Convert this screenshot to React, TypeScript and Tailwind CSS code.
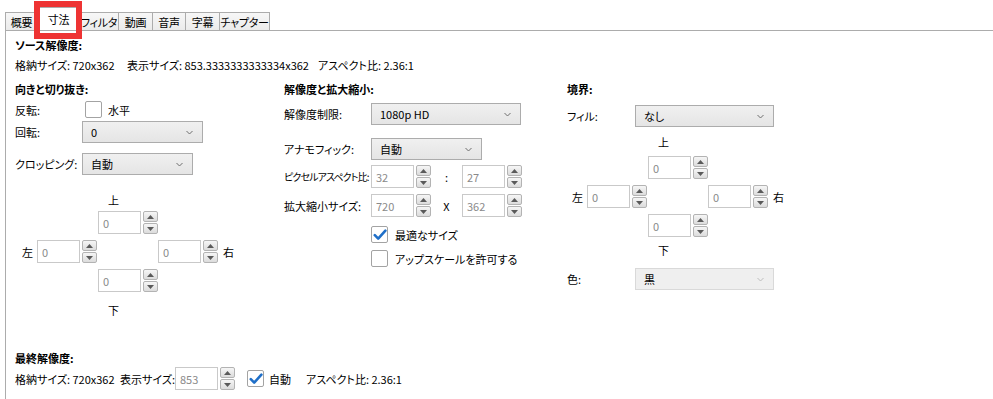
import React from "react";

const tabs = [
  { label: "概要", w: "w-[32px]" },
  { label: "寸法", w: "w-[42px]", active: true },
  { label: "フィルタ", w: "w-[39px]" },
  { label: "動画", w: "w-[34px]" },
  { label: "音声", w: "w-[33px]" },
  { label: "字幕", w: "w-[34px]" },
  { label: "チャプター", w: "w-[51px]" },
];

function Arrow({ up }: { up?: boolean }) {
  return (
    <svg width="7" height="4" viewBox="0 0 7 4" className="block">
      <path d={up ? "M0 4 L3.5 0 L7 4 Z" : "M0 0 L3.5 4 L7 0 Z"} fill="#5a5a5a" />
    </svg>
  );
}

function Spin({ value }: { value: string }) {
  return (
    <div className="flex h-[23px] shrink-0">
      <div className="w-[43px] h-full border border-[#c9c9c9] bg-white text-[#8a8a8a] pl-[4px] flex items-center">
        {value}
      </div>
      <div className="ml-[2px] w-[15px] h-full flex flex-col gap-[1px]">
        <div className="flex-1 flex items-center justify-center rounded-[2px] border border-[#b3b3b3] bg-gradient-to-b from-[#f6f6f6] to-[#dcdcdc]">
          <Arrow up />
        </div>
        <div className="flex-1 flex items-center justify-center rounded-[2px] border border-[#b3b3b3] bg-gradient-to-b from-[#f6f6f6] to-[#dcdcdc]">
          <Arrow />
        </div>
      </div>
    </div>
  );
}

function Chevron({ light }: { light?: boolean }) {
  return (
    <svg width="7" height="5" viewBox="0 0 7 5" className="block">
      <path d="M0.5 1 L3.5 4 L6.5 1" fill="none" stroke={light ? "#bdbdbd" : "#6e6e6e"} strokeWidth="1" />
    </svg>
  );
}

function Select({ value, className, disabled }: { value: string; className: string; disabled?: boolean }) {
  return (
    <div
      className={`h-[22px] shrink-0 flex items-center justify-between pl-[8px] pr-[9px] border ${
        disabled
          ? "border-[#d9d9d9] bg-[#efefef]"
          : "border-[#acacac] bg-gradient-to-b from-[#f0f0f0] to-[#e5e5e5]"
      } ${className}`}
    >
      <span>{value}</span>
      <Chevron light={disabled} />
    </div>
  );
}

function Check({ checked }: { checked?: boolean }) {
  return (
    <div className="w-[17px] h-[17px] shrink-0 border border-[#a3a3a3] rounded-[2px] bg-white flex items-center justify-center">
      {checked && (
        <svg width="14" height="12" viewBox="0 0 14 12">
          <path
            d="M1.8 6.2 L5.2 9.6 L12.4 1.6"
            fill="none"
            stroke="#1f6fc8"
            strokeWidth="2.6"
            strokeLinecap="round"
            strokeLinejoin="round"
          />
        </svg>
      )}
    </div>
  );
}

function Cross({ topGap, bottomGap }: { topGap: string; bottomGap: string }) {
  return (
    <div className="flex flex-col">
      <div className="pl-[86px] h-[16px]">上</div>
      <div className={`pl-[76px] ${topGap}`}>
        <Spin value="0" />
      </div>
      <div className="flex items-center mt-[6px]">
        <span className="w-[15px] shrink-0">左</span>
        <Spin value="0" />
        <div className="w-[61px] shrink-0" />
        <Spin value="0" />
        <span className="ml-[5px]">右</span>
      </div>
      <div className="pl-[76px] mt-[6px]">
        <Spin value="0" />
      </div>
      <div className={`pl-[86px] h-[16px] ${bottomGap}`}>下</div>
    </div>
  );
}

export default function App() {
  return (
    <div className="w-[993px] h-[399px] relative overflow-hidden bg-white text-black text-[11px] leading-[16px] font-['Noto_Sans_CJK_JP','Noto_Sans',sans-serif] [font-feature-settings:'palt']">
      {/* Tab strip */}
      <div className="h-[30px] flex items-end pl-[5px]">
        {tabs.map((t, i) => (
          <div
            key={t.label}
            className={`${t.w} shrink-0 whitespace-nowrap tracking-[-0.3px] flex items-center justify-center border-t border-l border-[#acacac] ${
              i === tabs.length - 1 ? "border-r" : ""
            } ${t.active ? "h-[23px] bg-white" : "h-[18px] bg-gradient-to-b from-[#f7f7f7] to-[#ebebeb]"}`}
          >
            {t.label}
          </div>
        ))}
      </div>

      {/* Panel */}
      <div className="ml-[5px] border-l border-t border-[#acacac] h-[369px] pl-[9px] pt-[6px]">
        <div className="font-bold">ソース解像度:</div>
        <div className="flex mt-[4px] whitespace-nowrap">
          <span className="w-[112px] shrink-0">格納サイズ: 720x362</span>
          <span className="w-[191px] shrink-0">表示サイズ: 853.3333333333334x362</span>
          <span>アスペクト比: 2.36:1</span>
        </div>

        <div className="flex mt-[8px] h-[269px]">
          {/* Orientation and crop */}
          <div className="w-[269px] shrink-0">
            <div className="font-bold">向きと切り抜き:</div>
            <div className="flex items-center mt-[4px] h-[17px]">
              <span className="w-[70px] shrink-0">反転:</span>
              <Check />
              <span className="ml-[6px]">水平</span>
            </div>
            <div className="flex items-center mt-[3px]">
              <span className="w-[67px] shrink-0">回転:</span>
              <Select value="0" className="w-[121px]" />
            </div>
            <div className="flex items-center mt-[10px]">
              <span className="w-[67px] shrink-0">クロッピング:</span>
              <Select value="自動" className="w-[111px]" />
            </div>
            <div className="ml-[7px] mt-[17px]">
              <Cross topGap="mt-[3px]" bottomGap="mt-[10px]" />
            </div>
          </div>

          {/* Resolution and scaling */}
          <div className="w-[283px] shrink-0">
            <div className="font-bold">解像度と拡大縮小:</div>
            <div className="flex items-center mt-[6px]">
              <span className="w-[87px] shrink-0">解像度制限:</span>
              <Select value="1080p HD" className="w-[150px]" />
            </div>
            <div className="flex items-center mt-[13px]">
              <span className="w-[87px] shrink-0">アナモフィック:</span>
              <Select value="自動" className="w-[111px]" />
            </div>
            <div className="flex items-center mt-[5px]">
              <span className="w-[87px] shrink-0 whitespace-nowrap text-[10px] tracking-[-0.9px]">
                ピクセルアスペクト比:
              </span>
              <Spin value="32" />
              <span className="w-[31px] shrink-0 text-center">:</span>
              <Spin value="27" />
            </div>
            <div className="flex items-center mt-[6px]">
              <span className="w-[87px] shrink-0 whitespace-nowrap">拡大縮小サイズ:</span>
              <Spin value="720" />
              <span className="w-[31px] shrink-0 text-center">X</span>
              <Spin value="362" />
            </div>
            <div className="flex items-center mt-[9px] pl-[87px]">
              <Check checked />
              <span className="ml-[7px]">最適なサイズ</span>
            </div>
            <div className="flex items-center mt-[7px] pl-[87px]">
              <Check />
              <span className="ml-[7px]">アップスケールを許可する</span>
            </div>
          </div>

          {/* Borders */}
          <div className="flex-1">
            <div className="font-bold">境界:</div>
            <div className="flex items-center mt-[8px]">
              <span className="w-[68px] shrink-0">フィル:</span>
              <Select value="なし" className="w-[139px]" />
            </div>
            <div className="ml-[5px] mt-[7px]">
              <Cross topGap="mt-[6px]" bottomGap="mt-[5px]" />
            </div>
            <div className="flex items-center mt-[10px]">
              <span className="w-[68px] shrink-0">色:</span>
              <Select value="黒" disabled className="w-[139px]" />
            </div>
          </div>
        </div>

        <div className="font-bold">最終解像度:</div>
        <div className="flex items-center mt-[1px] h-[23px] whitespace-nowrap">
          <span className="w-[105px] shrink-0">格納サイズ: 720x362</span>
          <span className="w-[55px] shrink-0">表示サイズ:</span>
          <Spin value="853" />
          <div className="ml-[12px]">
            <Check checked />
          </div>
          <span className="ml-[5px] w-[37px] shrink-0">自動</span>
          <span>アスペクト比: 2.36:1</span>
        </div>
      </div>

      {/* Red highlight around the active tab */}
      <div className="absolute left-[34px] top-[1px] w-[48px] h-[38px] border-[6px] border-[#ee3333]" />
    </div>
  );
}
